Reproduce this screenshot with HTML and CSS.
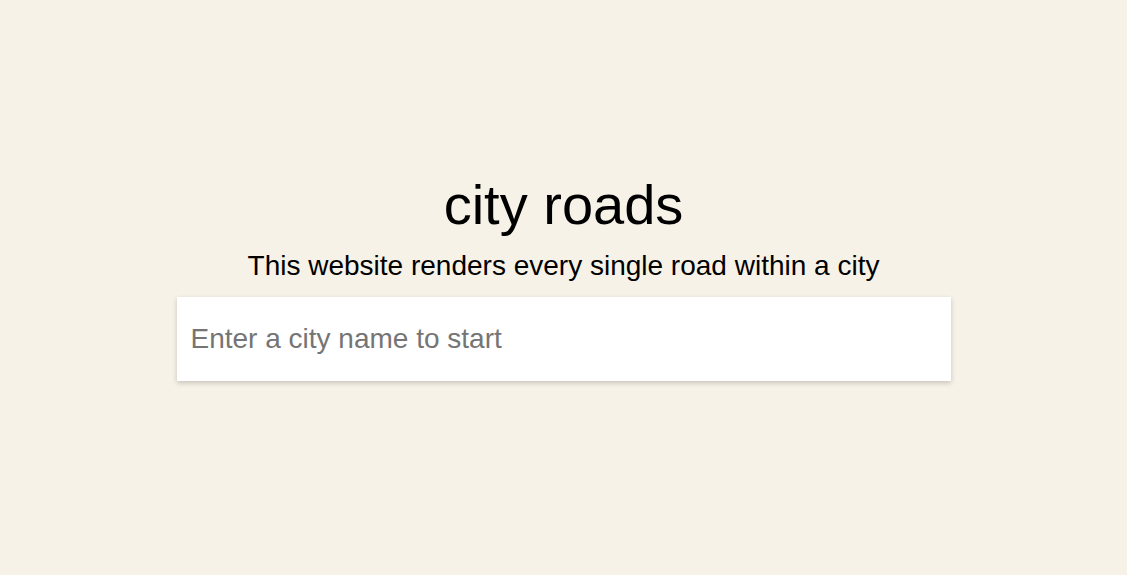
FILE: index.html
```html
<!DOCTYPE html>
<html>
<head>
<meta charset="utf-8">
<link rel="stylesheet" href="styles.css">
</head>
<body>
<main class="page">
  <div class="intro">
    <h1 class="title">city roads</h1>
    <p class="subtitle">This website renders every single road within a city</p>
    <div class="search">
      <input class="search-input" type="text" placeholder="Enter a city name to start">
    </div>
  </div>
</main>
</body>
</html>
```
FILE: styles.css
```css
html, body {
  margin: 0;
  padding: 0;
  height: 100%;
  background: #f7f2e8;
}
body {
  font-family: "Liberation Sans", Arial, sans-serif;
  color: #000;
}
.page {
  height: 100%;
  display: flex;
  justify-content: center;
}
.intro {
  display: flex;
  flex-direction: column;
  align-items: center;
  padding-top: 173px;
}
.title {
  margin: 0;
  font-size: 56px;
  font-weight: normal;
  line-height: 64px;
}
.subtitle {
  margin: 11px 0 0;
  font-size: 28px;
  line-height: 36px;
}
.search {
  margin-top: 13px;
  width: 774px;
  height: 84px;
  background: #fff;
  box-shadow: 0 2px 5px rgba(0, 0, 0, 0.2);
  display: flex;
  align-items: center;
}
.search-input {
  border: none;
  outline: none;
  background: transparent;
  width: 100%;
  padding: 0 14px;
  font-family: "Liberation Sans", Arial, sans-serif;
  font-size: 28px;
  color: #000;
}
.search-input::placeholder {
  color: #757575;
}
```
